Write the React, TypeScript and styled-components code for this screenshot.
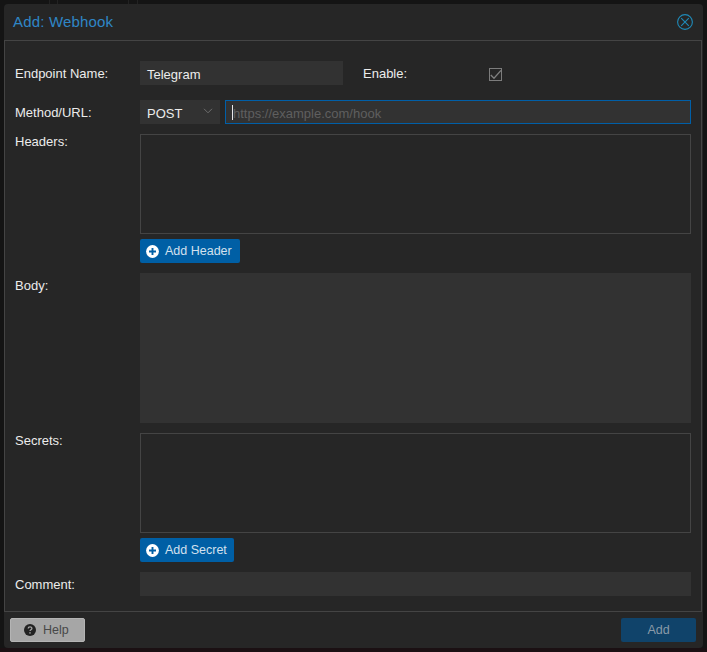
import React from "react";
import styled, { createGlobalStyle } from "styled-components";

const GlobalStyle = createGlobalStyle`
  html, body {
    margin: 0;
    padding: 0;
    background: #141414;
  }
  * {
    box-sizing: border-box;
  }
`;

const Page = styled.div`
  position: relative;
  width: 707px;
  height: 652px;
  padding: 4px;
  overflow: hidden;
  font-family: "Liberation Sans", Arial, sans-serif;
  font-size: 13px;
  -webkit-font-smoothing: antialiased;
`;

// dimmed toolbar of the page behind the dialog, only its lower edge shows
const BackToolbar = styled.div`
  position: absolute;
  top: 0;
  left: 0;
  height: 4px;
  display: flex;
`;

const BackItem = styled.span<{ $w: number }>`
  width: ${(p) => p.$w}px;
  border-right: 1px solid #222;
`;

const BackStrip = styled.div`
  position: absolute;
  left: 0;
  right: 0;
  bottom: 0;
  height: 4px;
  background: #1b1013;
`;

const Window = styled.div`
  position: relative;
  width: 699px;
  height: 644px;
  display: flex;
  flex-direction: column;
  background: #262626;
  border-radius: 4px;
`;

const Header = styled.div`
  height: 36px;
  flex: none;
  display: flex;
  align-items: center;
  justify-content: space-between;
  padding: 0 10px 0 9px;
`;

const Title = styled.div`
  color: #2f86c6;
  font-size: 15px;
  letter-spacing: 0.18px;
  margin-top: -2px;
`;

const Body = styled.div`
  flex: 1;
  border: 1px solid #444;
  padding: 20px 10px 0 10px;
  margin-right: 1px;
  display: flex;
  flex-direction: column;
`;

const Row = styled.div<{ $h: number; $mb?: number }>`
  display: flex;
  height: ${(p) => p.$h}px;
  margin-bottom: ${(p) => p.$mb ?? 0}px;
`;

const Label = styled.div<{ $w?: number; $lh?: number }>`
  width: ${(p) => p.$w ?? 125}px;
  flex: none;
  color: #ececec;
  font-size: 13px;
  line-height: ${(p) => p.$lh ?? 26}px;
`;

const Input = styled.div<{ $w?: number }>`
  width: ${(p) => (p.$w ? `${p.$w}px` : "auto")};
  flex: ${(p) => (p.$w ? "none" : 1)};
  height: 24px;
  background: #323232;
  color: #ececec;
  font-size: 13px;
  line-height: 27px;
  padding: 0 7px;
`;

const SelectBox = styled(Input)`
  position: relative;
  margin-right: 5px;
`;

const ChevronWrap = styled.span`
  position: absolute;
  top: 8px;
  right: 7px;
  line-height: 0;
`;

const UrlInput = styled(Input)`
  display: flex;
  align-items: center;
  border: 1px solid #005fa8;
  padding: 2px 6px 0;
  color: #5f5f5f;
`;

const Caret = styled.span`
  width: 1px;
  height: 15px;
  margin-top: -2px;
  background: #e8e8e8;
`;

const Frame = styled.div`
  flex: none;
  height: 100px;
  border: 1px solid #444;
`;

const TextArea = styled.div`
  flex: 1;
  height: 150px;
  background: #323232;
`;

const Column = styled.div`
  flex: 1;
  display: flex;
  flex-direction: column;
`;

const BlueButton = styled.div<{ $w: number }>`
  width: ${(p) => p.$w}px;
  height: 24px;
  margin-top: 5px;
  display: flex;
  align-items: center;
  gap: 6px;
  padding-left: 6px;
  background: #005fa5;
  border-radius: 2px;
  color: #d3e1ee;
  font-size: 12.5px;
  white-space: nowrap;
`;

const EnableLabel = styled(Label)`
  margin-left: 20px;
`;

const CheckBox = styled.div`
  position: relative;
  width: 13px;
  height: 13px;
  margin-top: 7px;
  border: 1px solid #7c7c7c;
`;

const CheckMark = styled.svg`
  position: absolute;
  top: -1px;
  left: -1px;
`;

const Footer = styled.div`
  flex: none;
  height: 36px;
  display: flex;
  align-items: center;
  justify-content: space-between;
  padding: 0 7px 0 6px;
`;

const HelpButton = styled.div`
  width: 75px;
  height: 24px;
  display: flex;
  align-items: center;
  gap: 7px;
  padding-left: 13px;
  background: #a6a6a6;
  border: 1px solid #b4b4b4;
  border-radius: 2px;
  color: #484848;
  font-size: 12.5px;
`;

const AddButton = styled.div`
  width: 75px;
  height: 24px;
  display: flex;
  align-items: center;
  justify-content: center;
  background: #10436a;
  border-radius: 2px;
  color: #8a9aa8;
  font-size: 12.5px;
`;

const CloseIcon = () => (
  <svg width="16" height="16" viewBox="0 0 16 16" fill="none" stroke="#1f8ab8" strokeWidth="1.1">
    <circle cx="8" cy="8" r="7.4" />
    <path d="M4.2 4.2l7.6 7.6M11.8 4.2l-7.6 7.6" />
  </svg>
);

const Chevron = () => (
  <svg width="10" height="6" viewBox="0 0 10 6" fill="none" stroke="#6e6e6e" strokeWidth="1">
    <path d="M1 .8l4 4 4-4" />
  </svg>
);

const Check = () => (
  <CheckMark width="13" height="13" viewBox="0 0 13 13" fill="none" stroke="#808080" strokeWidth="1.3">
    <path d="M1.8 7l3.2 3.2L12 2.4" />
  </CheckMark>
);

const PlusIcon = () => (
  <svg width="13" height="13" viewBox="0 0 13 13">
    <circle cx="6.5" cy="6.5" r="6.4" fill="#fff" />
    <path d="M3 6.5h7M6.5 3v7" stroke="#005fa5" strokeWidth="1.9" />
  </svg>
);

const HelpIcon = () => (
  <svg width="12" height="12" viewBox="0 0 12 12">
    <circle cx="6" cy="6" r="6" fill="#222" />
    <path d="M4.2 4.6c0-2.2 3.7-2.2 3.7-.1 0 1.3-1.9 1.3-1.9 2.6" fill="none" stroke="#a6a6a6" strokeWidth="1.3" />
    <rect x="5.3" y="8.2" width="1.4" height="1.4" fill="#a6a6a6" />
  </svg>
);

const App = () => {
  return (
    <Page>
      <GlobalStyle />
      <BackToolbar>
        <BackItem $w={50} />
        <BackItem $w={8} />
        <BackItem $w={71} />
        <BackItem $w={9} />
      </BackToolbar>
      <BackStrip />
      <Window>
        <Header>
          <Title>Add: Webhook</Title>
          <CloseIcon />
        </Header>
        <Body>
          <Row $h={24} $mb={15}>
            <Label>Endpoint Name:</Label>
            <Input $w={203}>Telegram</Input>
            <EnableLabel $w={126}>Enable:</EnableLabel>
            <CheckBox>
              <Check />
            </CheckBox>
          </Row>
          <Row $h={24} $mb={10}>
            <Label>Method/URL:</Label>
            <SelectBox $w={80}>
              POST
              <ChevronWrap>
                <Chevron />
              </ChevronWrap>
            </SelectBox>
            <UrlInput>
              <Caret />
              https://example.com/hook
            </UrlInput>
          </Row>
          <Row $h={129} $mb={10}>
            <Label $lh={16}>Headers:</Label>
            <Column>
              <Frame />
              <BlueButton $w={100}>
                <PlusIcon />
                Add Header
              </BlueButton>
            </Column>
          </Row>
          <Row $h={150} $mb={10}>
            <Label>Body:</Label>
            <TextArea />
          </Row>
          <Row $h={129} $mb={10}>
            <Label $lh={16}>Secrets:</Label>
            <Column>
              <Frame />
              <BlueButton $w={94}>
                <PlusIcon />
                Add Secret
              </BlueButton>
            </Column>
          </Row>
          <Row $h={24}>
            <Label>Comment:</Label>
            <Input />
          </Row>
        </Body>
        <Footer>
          <HelpButton>
            <HelpIcon />
            Help
          </HelpButton>
          <AddButton>Add</AddButton>
        </Footer>
      </Window>
    </Page>
  );
};

export default App;
